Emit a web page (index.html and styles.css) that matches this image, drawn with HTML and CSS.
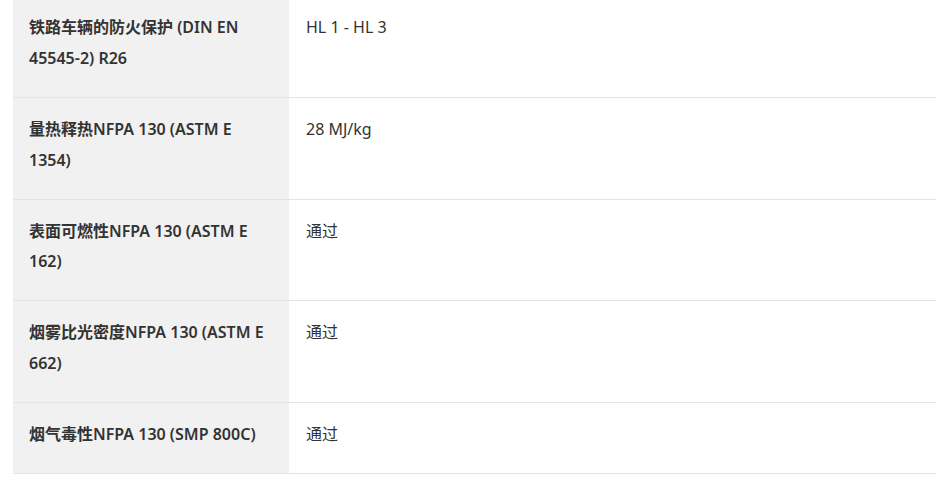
FILE: index.html
```html
<!DOCTYPE html>
<html lang="zh">
<head>
<meta charset="utf-8">
<link rel="stylesheet" href="styles.css">
</head>
<body>
<div class="wrap">
<table class="spec">
<tbody>
<tr><th>铁路车辆的防火保护 (DIN EN 45545-2) R26</th><td>HL 1 - HL 3</td></tr>
<tr><th>量热释热NFPA 130 (ASTM E 1354)</th><td>28 MJ/kg</td></tr>
<tr><th>表面可燃性NFPA 130 (ASTM E 162)</th><td>通过</td></tr>
<tr><th>烟雾比光密度NFPA 130 (ASTM E 662)</th><td>通过</td></tr>
<tr><th>烟气毒性NFPA 130 (SMP 800C)</th><td>通过</td></tr>
</tbody>
</table>
</div>
</body>
</html>
```
FILE: styles.css
```css
html, body {
  margin: 0;
  padding: 0;
  background: #ffffff;
}
.wrap {
  padding: 0 12px 0 13px;
  margin-top: -3.67px;
}
.spec {
  width: 923px;
  border-collapse: collapse;
  font-family: "Noto Sans", "Noto Sans CJK SC", sans-serif;
  font-size: 16px;
  line-height: 30.67px;
  color: #333333;
}
.spec th, .spec td {
  vertical-align: top;
  text-align: left;
  padding: 16px 16px 23.33px 16px;
  border-bottom: 1px solid #e4e4e8;
}
.spec th {
  width: 244px;
  background: #f1f1f1;
  font-weight: 600;
}
.spec td {
  font-weight: 400;
  padding-left: 17px;
}
```
